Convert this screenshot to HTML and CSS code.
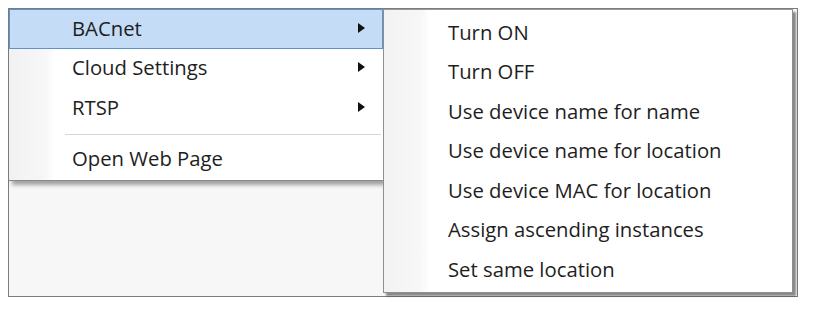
FILE: index.html
```
<!DOCTYPE html>
<html>
<head>
<meta charset="utf-8">
<link rel="stylesheet" href="styles.css">
</head>
<body>
<div class="frame">
  <div class="menu main">
    <div class="item active"><span class="label">BACnet</span><span class="arrow"></span></div>
    <div class="item"><span class="label">Cloud Settings</span><span class="arrow"></span></div>
    <div class="item"><span class="label">RTSP</span><span class="arrow"></span></div>
    <div class="sep"></div>
    <div class="item"><span class="label">Open Web Page</span></div>
  </div>
  <div class="menu sub">
    <div class="item"><span class="label">Turn ON</span></div>
    <div class="item"><span class="label">Turn OFF</span></div>
    <div class="item"><span class="label">Use device name for name</span></div>
    <div class="item"><span class="label">Use device name for location</span></div>
    <div class="item"><span class="label">Use device MAC for location</span></div>
    <div class="item"><span class="label">Assign ascending instances</span></div>
    <div class="item"><span class="label">Set same location</span></div>
  </div>
</div>
</body>
</html>
```
FILE: styles.css
```
html, body {
  margin: 0;
  padding: 0;
  background: #ffffff;
}
body {
  padding: 8px;
  font-family: "Open Sans", "Noto Sans", sans-serif;
  font-size: 20.3px;
  color: #1e1e1e;
}
.frame {
  box-sizing: border-box;
  width: 790px;
  height: 289px;
  border: 1px solid #7c7c7c;
  background: #f8f7f8;
  display: flex;
  align-items: flex-start;
}
.menu {
  box-sizing: border-box;
  background-color: #ffffff;
  display: flex;
  flex-direction: column;
}
.main {
  width: 375px;
  height: 172px;
  border-right: 1px solid #8c8c8c;
  border-bottom: 1px solid #8a8a8a;
  background-image: linear-gradient(to right, #f1f1f1 0, #f7f7f7 36px, #fcfcfc 43px, #ffffff 44px);
  box-shadow: 3px 4px 4px rgba(0, 0, 0, 0.35);
  position: relative;
  z-index: 1;
}
.sub {
  width: 410px;
  height: 284px;
  margin-left: -1px;
  padding-top: 3px;
  border: 1px solid #8f8f8f;
  border-top-color: #9a9a9a;
  background-image: linear-gradient(to right, #f2f2f2 0, #f7f7f7 36px, #fcfcfc 43px, #ffffff 44px);
  box-shadow: 3px 3px 2px rgba(0, 0, 0, 0.45);
  position: relative;
  z-index: 2;
}
.item {
  box-sizing: border-box;
  height: 39.5px;
  display: flex;
  align-items: center;
  flex-shrink: 0;
  border: 1px solid transparent;
  padding-bottom: 2px;
}
.main .item {
  padding-left: 62px;
  padding-right: 17px;
}
.sub .item {
  padding-left: 63px;
}
.item.active {
  background: #c4dcf5;
  border-color: #5e93d2;
}
.label {
  flex: 1;
  white-space: nowrap;
  line-height: 1;
}
.arrow {
  width: 0;
  height: 0;
  border-top: 5px solid transparent;
  border-bottom: 5px solid transparent;
  border-left: 7px solid #111111;
}
.sep {
  flex-shrink: 0;
  height: 1px;
  margin: 6.5px 2px 4px 56px;
  background: #d5d5d5;
}
```
